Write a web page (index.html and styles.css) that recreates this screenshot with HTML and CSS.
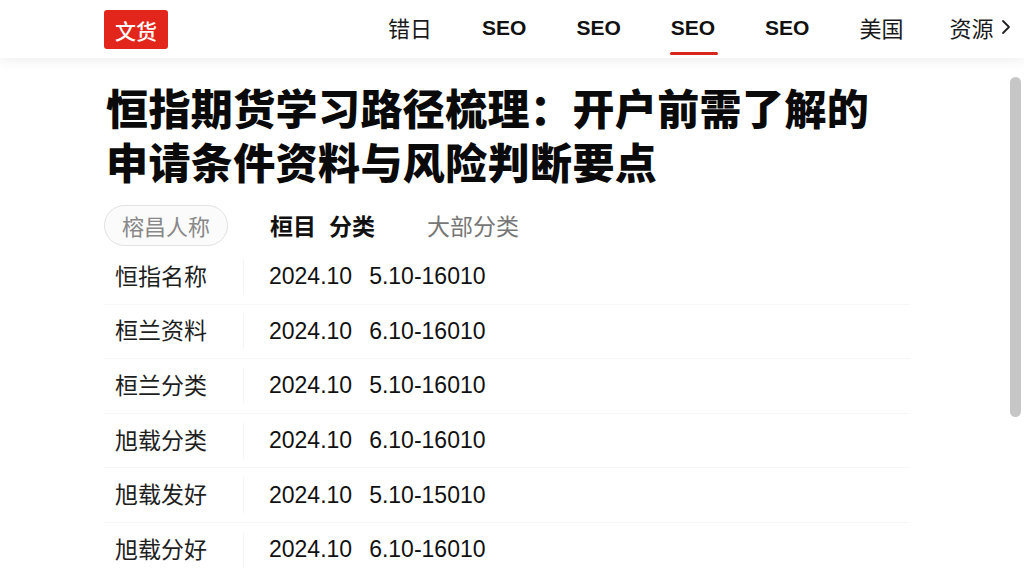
FILE: index.html
```html
<!DOCTYPE html>
<html lang="zh">
<head>
<meta charset="utf-8">
<title>恒指期货学习路径梳理</title>
<link rel="stylesheet" href="styles.css">
</head>
<body>
<header class="topbar">
  <div class="logo">文货</div>
  <nav class="nav">
    <a class="nav-item">错日</a>
    <a class="nav-item latin">SEO</a>
    <a class="nav-item latin">SEO</a>
    <a class="nav-item latin active">SEO</a>
    <a class="nav-item latin">SEO</a>
    <a class="nav-item tight">美国</a>
    <a class="nav-item more">资源<svg class="chev" width="10" height="16" viewBox="0 0 10 16"><polyline points="2,2 8,8 2,14" fill="none" stroke="#222" stroke-width="1.8" stroke-linecap="round" stroke-linejoin="round"/></svg></a>
  </nav>
</header>
<main class="main">
  <h1 class="title"><span class="tline">恒指期货学习路径梳理：开户前需了解的</span><span class="tline">申请条件资料与风险判断要点</span></h1>
  <div class="tabs">
    <span class="pill">榕昌人称</span>
    <span class="tab strong">桓目</span>
    <span class="tab strong second">分类</span>
    <span class="tab muted">大部分类</span>
  </div>
  <div class="table">
    <div class="row"><div class="label">恒指名称</div><div class="value"><span>2024.10</span><span>5.10-16010</span></div></div>
    <div class="row"><div class="label">桓兰资料</div><div class="value"><span>2024.10</span><span>6.10-16010</span></div></div>
    <div class="row"><div class="label">桓兰分类</div><div class="value"><span>2024.10</span><span>5.10-16010</span></div></div>
    <div class="row"><div class="label">旭载分类</div><div class="value"><span>2024.10</span><span>6.10-16010</span></div></div>
    <div class="row"><div class="label">旭载发好</div><div class="value"><span>2024.10</span><span>5.10-15010</span></div></div>
    <div class="row"><div class="label">旭载分好</div><div class="value"><span>2024.10</span><span>6.10-16010</span></div></div>
  </div>
</main>
<div class="scroll-thumb"></div>
</body>
</html>
```

FILE: styles.css
```css
html, body {
  margin: 0;
  padding: 0;
  background: #ffffff;
  overflow: hidden;
}
body {
  font-family: "Liberation Sans", "Noto Sans CJK SC", sans-serif;
  color: #111;
  width: 1024px;
  height: 576px;
  position: relative;
}
.topbar {
  height: 58px;
  display: flex;
  align-items: center;
  padding-left: 104px;
  background: #fff;
  box-shadow: 0 4px 10px rgba(0, 0, 0, 0.06);
  position: relative;
  z-index: 2;
}
.logo {
  width: 64px;
  height: 39px;
  background: #e3261c;
  border-radius: 3px;
  color: #fff;
  font-family: "Noto Sans CJK SC", sans-serif;
  font-size: 21px;
  font-weight: 500;
  display: flex;
  align-items: center;
  justify-content: center;
  margin-top: 1px;
}
.nav {
  display: flex;
  align-items: center;
  margin-left: 220px;
  height: 58px;
}
.nav-item {
  position: relative;
  height: 58px;
  display: flex;
  align-items: center;
  padding-bottom: 4px;
  box-sizing: border-box;
  font-family: "Noto Sans CJK SC", sans-serif;
  font-size: 22px;
  color: #1a1a1a;
  margin-right: 50px;
  white-space: nowrap;
}
.nav-item.latin {
  font-family: "Liberation Sans", sans-serif;
  font-weight: 700;
  font-size: 21px;
  color: #111;
  padding-bottom: 2px;
}
.nav-item.tight {
  margin-right: 46px;
}
.nav-item.active::after {
  content: "";
  position: absolute;
  left: -1px;
  right: -3px;
  bottom: 3px;
  height: 3px;
  border-radius: 2px;
  background: #d9261c;
}
.nav-item.more {
  margin-right: 0;
}
.chev {
  margin-left: 8px;
}
.main {
  padding-left: 104px;
}
.title {
  margin: 22px 0 0 2px;
  font-family: "Noto Sans CJK SC", sans-serif;
  font-size: 42px;
  font-weight: 900;
  line-height: 54px;
  color: #0a0a0a;
  letter-spacing: 0.4px;
}
.tline {
  display: block;
  height: 54px;
}
.tabs {
  display: flex;
  align-items: center;
  margin-top: 17px;
  height: 41px;
}
.pill {
  height: 39px;
  padding: 0 17px 2px;
  box-sizing: content-box;
  border: 1px solid #e2e2e2;
  border-radius: 21px;
  background: #fbfbfb;
  font-family: "Noto Sans CJK SC", sans-serif;
  font-size: 22px;
  color: #888;
  display: flex;
  align-items: center;
  height: 37px;
}
.tab {
  font-family: "Noto Sans CJK SC", sans-serif;
  font-size: 23px;
  padding-bottom: 2px;
}
.tab.strong {
  font-weight: 700;
  color: #111;
  margin-left: 42px;
}
.tab.strong.second {
  margin-left: 13px;
}
.tab.muted {
  color: #777;
  margin-left: 52px;
}
.table {
  margin-top: 4px;
  width: 806px;
}
.row {
  display: flex;
  align-items: center;
  height: 54.6px;
  border-bottom: 1px solid #f7f7f7;
  box-sizing: border-box;
}
.label {
  width: 140px;
  padding-left: 11px;
  padding-bottom: 3px;
  box-sizing: border-box;
  font-family: "Noto Sans CJK SC", sans-serif;
  font-size: 23px;
  color: #1e1e1e;
  height: 36px;
  line-height: 33px;
  border-right: 1px solid #f5f5f5;
}
.value {
  display: flex;
  gap: 17px;
  padding-left: 25px;
  font-family: "Liberation Sans", sans-serif;
  font-size: 23px;
  color: #111;
}
.scroll-thumb {
  position: absolute;
  left: 1010px;
  top: 77px;
  width: 11px;
  height: 340px;
  border-radius: 6px;
  background: #c6c6c6;
}
```
